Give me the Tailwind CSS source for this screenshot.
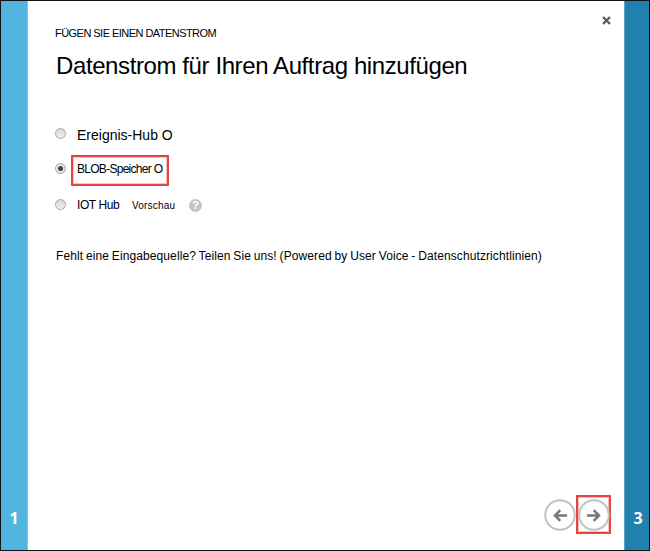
<!DOCTYPE html>
<html lang="de">
<head>
<meta charset="utf-8">
<title>Datenstrom hinzufügen</title>
<script src="https://cdn.jsdelivr.net/npm/@tailwindcss/browser@4"></script>
</head>
<body class="bg-white">
<div class="flex w-[650px] h-[551px] border border-[#111116] bg-white overflow-hidden text-black whitespace-nowrap font-['Liberation_Sans',Arial,sans-serif]">
  <aside class="w-[27px] shrink-0 bg-[#52b5e0] border-r border-[#7cc7e8] flex flex-col justify-end items-center pb-[21px] text-white font-bold text-base leading-[22px] font-['Open_Sans',sans-serif]">1</aside>
  <main class="flex-1 min-w-0 flex flex-col pl-[27px]">
    <header class="flex justify-between h-[49px]">
      <p class="pt-[24px] text-[11px] leading-4 tracking-[-0.54px]">FÜGEN SIE EINEN DATENSTROM</p>
      <svg class="mt-[15px] mr-[13px]" width="9" height="9" viewBox="0 0 9 9"><path d="M1 1 8 8M8 1 1 8" stroke="#5a5a5a" stroke-width="2.3"/></svg>
    </header>
    <h1 class="pl-px h-8 text-[24px] leading-8 tracking-[-0.4px]">Datenstrom für Ihren Auftrag hinzufügen</h1>
    <div class="mt-[38px] flex flex-col">
      <label class="flex items-center h-[30px]">
        <span class="size-[11px] mb-[4px] rounded-full border border-[#a8a8a8] bg-linear-to-b from-[#d8d8d8] to-[#eeeeee]"></span>
        <span class="ml-[11px] text-[14px]">Ereignis-Hub O</span>
      </label>
      <label class="flex items-center mt-[5px] h-[31px]">
        <span class="size-[11px] mb-[4px] rounded-full border border-[#a8a8a8] bg-[#e4e4e4] flex items-center justify-center"><span class="size-[5px] rounded-full bg-[#444]"></span></span>
        <span class="ml-[5px] w-[98px] h-[31px] border-2 border-[#e64441] inset-shadow-[0_0_0_1px_#e6444155] pl-[4px] text-[12px] leading-[24px] tracking-[-0.72px]">BLOB-Speicher O</span>
      </label>
      <div class="flex items-center mt-[3px] h-[32px]">
        <span class="size-[11px] mb-[2px] rounded-full border border-[#a8a8a8] bg-linear-to-b from-[#d8d8d8] to-[#eeeeee]"></span>
        <span class="ml-[11px] w-[55px] text-[12px] tracking-[-0.4px]">IOT Hub</span>
        <span class="w-[57px] text-[10px] tracking-[0.2px]">Vorschau</span>
        <span class="size-[13px] rounded-full bg-[#c4c4c4] text-white font-bold text-[11px] leading-[13px] text-center">?</span>
      </div>
    </div>
    <p class="mt-[27px] pl-px text-[12px] leading-4 tracking-[0.1px] [word-spacing:-0.65px]">Fehlt eine Eingabequelle? Teilen Sie uns! (Powered by User Voice - Datenschutzrichtlinien)</p>
    <footer class="mt-auto mb-[16px] mr-[13px] flex justify-end items-center">
      <svg class="mt-px" width="32" height="32" viewBox="0 0 32 32" fill="none"><circle cx="16" cy="16" r="14.8" stroke="#c2c2c2" stroke-width="2"/><path d="M23 16.5H11M16.3 11.2l-5.3 5.3 5.3 5.3" stroke="#777" stroke-width="2.5"/></svg>
      <span class="w-[35px] h-[39px] border-2 border-[#e64441] inset-shadow-[0_0_0_1px_#e6444155] flex items-center justify-center pt-px"><svg class="shrink-0" width="32" height="32" viewBox="0 0 32 32" fill="none"><circle cx="16" cy="16" r="14.8" stroke="#c2c2c2" stroke-width="2"/><path d="M9 16.5H21M15.7 11.2l5.3 5.3-5.3 5.3" stroke="#777" stroke-width="2.5"/></svg></span>
    </footer>
  </main>
  <aside class="w-[25px] shrink-0 bg-[#2081ae] border-l border-[#5aa5c6] flex flex-col justify-end items-center pl-[2px] pb-[21px] text-white font-bold text-base leading-[22px] font-['Open_Sans',sans-serif]">3</aside>
</div>
</body>
</html>
